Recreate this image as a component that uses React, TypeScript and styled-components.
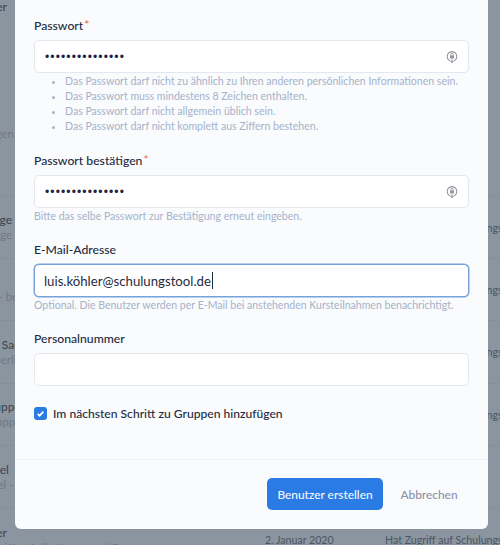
import React from "react";
import styled, { createGlobalStyle } from "styled-components";

const Global = createGlobalStyle`
  html, body { margin: 0; padding: 0; height: 100%; background: #8b959f; overflow: hidden; }
  body { font-family: Lato, "Noto Sans", sans-serif; }
  * { box-sizing: border-box; }
`;

const Page = styled.div`
  position: relative;
  width: 500px;
  height: 545px;
  overflow: hidden;
  background: #8b959f;
`;

/* dimmed table behind the dialog */
const Table = styled.div`
  display: flex;
  flex-direction: column;
  width: 500px;
`;
const Row = styled.div<{ $h: number; $line?: boolean }>`
  display: grid;
  grid-template-columns: 265px 120px 1fr;
  align-items: center;
  flex: none;
  height: ${(p) => p.$h}px;
  border-bottom: ${(p) => (p.$line ? "1px solid #858f9a" : "none")};
  white-space: nowrap;
`;
const NameCell = styled.div<{ $end: number }>`
  display: flex;
  flex-direction: column;
  align-items: flex-end;
  width: ${(p) => p.$end}px;
  gap: 1px;
`;
const Name = styled.span<{ $inset?: number }>`
  margin-right: ${(p) => p.$inset ?? 0}px;
  font-size: 12px;
  line-height: 14px;
  font-weight: 500;
  color: #3e4857;
`;
const Sub = styled.span`
  font-size: 11.5px;
  line-height: 14px;
  color: #6f7986;
`;
const DateCell = styled.span`
  font-size: 10.6px;
  color: #4b5563;
`;
const AccessCell = styled.span`
  font-size: 10.6px;
  color: #4b5563;
`;

/* dialog */
const Modal = styled.div`
  position: absolute;
  left: 15px;
  bottom: 16px;
  width: 473px;
  height: 560px;
  display: flex;
  flex-direction: column;
  justify-content: flex-end;
  background: #f9fbfd;
  border-radius: 6px;
`;
const Form = styled.div`
  display: flex;
  flex-direction: column;
  padding: 0 19px;
`;
const Field = styled.div<{ $gap: number }>`
  display: flex;
  flex-direction: column;
  margin-bottom: ${(p) => p.$gap}px;
`;
const Label = styled.div`
  height: 15px;
  margin-bottom: 7px;
  font-size: 12.2px;
  line-height: 15px;
  font-weight: 500;
  color: #1f2b41;
`;
const Star = styled.span`
  color: #ef6a4c;
  position: relative;
  top: -1px;
  margin-left: 1px;
`;
const Box = styled.div<{ $focus?: boolean }>`
  display: flex;
  align-items: center;
  justify-content: space-between;
  height: 33px;
  padding: 0 10px 0 9px;
  background: #fff;
  border-radius: 5px;
  border: 1px solid ${(p) => (p.$focus ? "#76a3dc" : "#e3e7ee")};
  box-shadow: ${(p) => (p.$focus ? "0 0 0 0.5px #76a3dc" : "none")};
`;
const Dots = styled.span`
  margin-left: 1px;
  font-family: "Liberation Sans", sans-serif;
  font-size: 12px;
  letter-spacing: 1.13px;
  color: #1a2540;
`;
const Value = styled.span`
  display: flex;
  align-items: center;
  font-size: 13.2px;
  color: #1f2b41;
`;
const Caret = styled.span`
  width: 1px;
  height: 17px;
  margin-left: 1px;
  background: #1f2b41;
`;
const Hints = styled.ul`
  margin: 0;
  padding: 0 0 0 31px;
  list-style: disc;
  margin-top: 1px;
  color: #a9b4cb;
`;
const Hint = styled.li`
  font-size: 10.55px;
  line-height: 15px;
  color: #a6b2ca;
`;
const Help = styled.div`
  margin-top: 1px;
  font-size: 10.55px;
  line-height: 15px;
  color: #a6b2ca;
`;
const CheckRow = styled.label`
  display: flex;
  align-items: center;
  gap: 6px;
  height: 14px;
  margin-bottom: 39px;
  font-size: 12.1px;
  font-weight: 500;
  color: #1f2b41;
`;
const CheckBox = styled.span`
  display: flex;
  align-items: center;
  justify-content: center;
  width: 13px;
  height: 13px;
  border-radius: 3px;
  background: #2b7be5;
`;
const Footer = styled.div`
  display: flex;
  align-items: flex-start;
  justify-content: flex-end;
  gap: 17px;
  height: 70px;
  padding: 18px 30px 0 0;
  border-top: 1px solid #edf0f4;
`;
const Primary = styled.button`
  width: 116px;
  height: 32px;
  border: 0;
  border-radius: 5px;
  padding: 0;
  background: #2b7be5;
  color: #f4f8fe;
  font-family: inherit;
  font-size: 11.9px;
  font-weight: 500;
`;
const Ghost = styled.button`
  height: 32px;
  width: 58px;
  border: 0;
  padding: 0;
  background: none;
  color: #8b93a6;
  font-family: inherit;
  font-size: 11.9px;
  font-weight: 500;
`;

const LockIcon = () => (
  <svg width="12" height="14" viewBox="0 0 14 16" fill="none">
    <path d="M4.6 12.4A5.6 5.6 0 1 1 9.4 12.4" stroke="#94989f" strokeWidth="1.3" />
    <rect x="4.6" y="5.9" width="4.8" height="3.9" rx="0.6" fill="#94989f" />
    <path d="M5.6 6V4.9a1.4 1.4 0 0 1 2.8 0V6" stroke="#94989f" strokeWidth="1" />
    <path d="M7 10.5v3.5M5.3 12.6 7 14.4l1.7-1.8" stroke="#94989f" strokeWidth="1.2" />
  </svg>
);

const CheckMark = () => (
  <svg width="9" height="9" viewBox="0 0 9 9" fill="none">
    <path d="M1.6 4.8 3.6 6.7 7.4 2.6" stroke="#fff" strokeWidth="1.7" />
  </svg>
);

type RowData = {
  h: number;
  end: number;
  name?: string;
  inset?: number;
  sub?: string;
  line?: boolean;
  access?: boolean;
};

const rows: RowData[] = [
  { h: 6, end: 7, name: "Schulungsleiter" },
  { h: 108, end: 0 },
  { h: 40, end: 14, sub: "Abteilungen" },
  { h: 43, end: 0, line: true },
  { h: 62, end: 12, name: "Abrechnung Manage", sub: "Abrechnung Manage", line: true, access: true },
  { h: 62, end: 60, name: "\u00a0", sub: "Kann Kurse - bearbeiten", line: true, access: true },
  { h: 63, end: 45, name: "Verwalter Sachsen", sub: "Verwalter Berlin und", line: true, access: true },
  { h: 62, end: 30, name: "Gruppen Support", sub: "Gruppen Support", line: true, access: true },
  { h: 63, end: 35, name: "Level", inset: 26, sub: "Level - Alle", line: true },
];

export default function App() {
  return (
    <Page>
      <Global />
      <Table>
        {rows.map((r, i) => (
          <Row key={i} $h={r.h} $line={r.line}>
            <NameCell $end={r.end}>
              {r.name && <Name $inset={r.inset}>{r.name}</Name>}
              {r.sub && <Sub>{r.sub}</Sub>}
            </NameCell>
            <span />
            {r.access ? <AccessCell>Hat Zugriff auf Schulungstool</AccessCell> : <span />}
          </Row>
        ))}
        <Row $h={62}>
          <NameCell $end={155}>
            <Name $inset={148}>Schulungsleiter</Name>
            <Sub>Hat Zugriff auf alle Kurse und Gruppen</Sub>
          </NameCell>
          <DateCell>2. Januar 2020</DateCell>
          <AccessCell>Hat Zugriff auf Schulungstool</AccessCell>
        </Row>
      </Table>

      <Modal>
        <Form>
          <Field $gap={19}>
            <Label>
              Passwort<Star>*</Star>
            </Label>
            <Box>
              <Dots>•••••••••••••••</Dots>
              <LockIcon />
            </Box>
            <Hints>
              <Hint>Das Passwort darf nicht zu ähnlich zu Ihren anderen persönlichen Informationen sein.</Hint>
              <Hint>Das Passwort muss mindestens 8 Zeichen enthalten.</Hint>
              <Hint>Das Passwort darf nicht allgemein üblich sein.</Hint>
              <Hint>Das Passwort darf nicht komplett aus Ziffern bestehen.</Hint>
            </Hints>
          </Field>
          <Field $gap={18}>
            <Label>
              Passwort bestätigen<Star>*</Star>
            </Label>
            <Box>
              <Dots>•••••••••••••••</Dots>
              <LockIcon />
            </Box>
            <Help>Bitte das selbe Passwort zur Bestätigung erneut eingeben.</Help>
          </Field>
          <Field $gap={18}>
            <Label>E-Mail-Adresse</Label>
            <Box $focus>
              <Value>
                luis.köhler@schulungstool.de
                <Caret />
              </Value>
            </Box>
            <Help>Optional. Die Benutzer werden per E-Mail bei anstehenden Kursteilnahmen benachrichtigt.</Help>
          </Field>
          <Field $gap={20}>
            <Label>Personalnummer</Label>
            <Box />
          </Field>
          <CheckRow>
            <CheckBox>
              <CheckMark />
            </CheckBox>
            Im nächsten Schritt zu Gruppen hinzufügen
          </CheckRow>
        </Form>
        <Footer>
          <Primary>Benutzer erstellen</Primary>
          <Ghost>Abbrechen</Ghost>
        </Footer>
      </Modal>
    </Page>
  );
}
